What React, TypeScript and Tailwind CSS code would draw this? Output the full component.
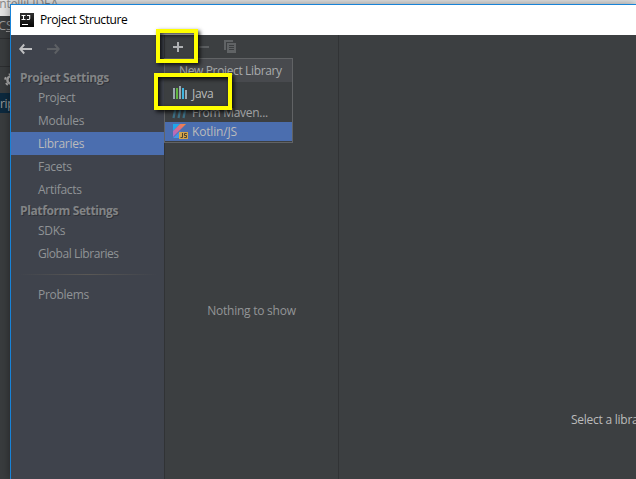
import type { ReactNode } from "react";

function Heading({ children }: { children: ReactNode }) {
  return (
    <div className="h-[18px] pl-[9px] text-[12px] leading-[19px] font-bold tracking-[-0.32px] text-[#828486] [text-shadow:1px_1px_0_#303238]">
      {children}
    </div>
  );
}

function Item({ children, selected = false }: { children: ReactNode; selected?: boolean }) {
  return (
    <div className={selected ? "h-[23px] bg-[#4b6eaf] pl-[27px] leading-[23px] text-[#bbbbbb]" : "h-[23px] pl-[27px] leading-[23px] text-[#909396]"}>
      {children}
    </div>
  );
}

function Arrow({ color, flip = false }: { color: string; flip?: boolean }) {
  return (
    <svg width="14" height="12" viewBox="0 0 14 12" className={flip ? "-scale-x-100" : ""} fill="none" stroke={color} strokeWidth="1.9">
      <path d="M5.2 1.5 1.2 6l4 4.5M1.5 6H13" />
    </svg>
  );
}

function Bars() {
  return (
    <svg width="16" height="14" viewBox="0 0 16 14">
      <path fill="#9aa7b0" d="M1 2h2v11H1zM7 0h2v13H7zM13 4h2v9h-2z" />
      <path fill="#62b543" d="M4 2h2v11H4z" />
      <path fill="#40b6e0" d="M10 2h2v11h-2z" />
    </svg>
  );
}

export default function App() {
  return (
    <div className="relative h-[479px] w-[636px] overflow-hidden bg-[#393c3e] font-['Open_Sans','Noto_Sans',sans-serif] text-[12px] tracking-[-0.28px] whitespace-nowrap">
      <div className="h-4 overflow-hidden bg-[#e4e4e4] leading-[11px] tracking-[-0.1px] text-[#888]"><div className="-mt-[2px] -ml-[4px] text-[12px]">IntelliJ IDEA</div></div>
      <div className="h-[23px] border-b border-[#2c2e30] text-[13px] text-[#9a9a9a]"><span className="-ml-[2px]">C<u>S</u>S</span></div>
      <div className="h-[28px] border-b border-[#2c2e30]" />
      <div className="h-[28px] pt-[6px] pl-[4px]">
        <svg width="14" height="14" viewBox="0 0 14 14" fill="none" stroke="#aaa"><circle cx="7" cy="7" r="3.6" strokeWidth="2.4" /><circle cx="7" cy="7" r="5.8" strokeWidth="2" strokeDasharray="2.5 3.57" /></svg>
      </div>
      <div className="-mt-[2px] h-5 bg-[#0d293e] leading-[22px] text-[#999]">ript</div>

      <div className="absolute top-1 left-[10px] flex h-[475px] w-[626px] flex-col border-t border-l border-[#1883d7] bg-[#3c3f41] shadow-[0_0_9px_rgba(0,0,0,0.4)]">
        <header className="flex h-[30px] shrink-0 items-center bg-white pl-[9px] text-[12px] tracking-[-0.42px] text-black">
          <svg width="14" height="14" viewBox="0 0 14 14" className="mr-[6px]">
            <defs><linearGradient id="logo" x2="0" y2="1"><stop stopColor="#303030" /><stop offset="1" stopColor="#050505" /></linearGradient></defs>
            <path fill="url(#logo)" d="M0 0h14v14H0z" />
            <path fill="none" stroke="#fff" strokeWidth="1.1" d="M1.5 2.5h4M3.5 2.5v4M1.5 6.5h4M7 2.5h2.7v2.9q0 1.1-1.1 1.1H6.8M2 11.5h6" />
          </svg>
          <span>Project Structure</span>
        </header>
        <div className="flex min-h-0 flex-1">
          <aside className="w-[153px] shrink-0 bg-[#3f434c]">
            <div className="flex h-[33px] items-start gap-[13px] pt-[8px] pl-[8px]">
              <Arrow color="#bfc0c2" />
              <Arrow color="#5d6064" flip />
            </div>
            <Heading>Project Settings</Heading>
            <Item>Project</Item>
            <Item>Modules</Item>
            <Item selected>Libraries</Item>
            <Item>Facets</Item>
            <Item>Artifacts</Item>
            <Heading><span className="tracking-[-0.38px]">Platform Settings</span></Heading>
            <Item>SDKs</Item>
            <Item><span className="tracking-[-0.45px]">Global Libraries</span></Item>
            <div className="mx-[7px] mt-[9px] mb-[8px] h-px bg-linear-to-r from-transparent via-[#5a5855] to-transparent" />
            <Item>Problems</Item>
          </aside>
          <section className="flex w-[175px] shrink-0 flex-col border-x border-[#313335]">
            <div className="flex h-[23px] items-center pl-[8px]">
              <svg width="10" height="10" viewBox="0 0 10 10" className="mt-px mr-[16px]"><path stroke="#afb1b3" strokeWidth="2" d="M5 0v10M0 5h10" /></svg>
              <svg width="10" height="10" viewBox="0 0 10 10" className="mt-px mr-[15px]"><path fill="#5c5f61" d="M0 4h10v2H0z" /></svg>
              <svg width="12" height="13" viewBox="0 0 12 13"><path fill="#606365" d="M0 0h9v2H2v8H0zM3 3h9v10H3z" /><path stroke="#3c3f41" d="M5 5.5h5M5 7.5h5M5 9.5h5" /></svg>
            </div>
            <div className="mt-[242px] text-center leading-[22px] tracking-[-0.25px] text-[#939597]">Nothing to show</div>
          </section>
          <main className="min-w-0 flex-1 overflow-hidden pt-[374px] pl-[232px] leading-[22px] tracking-[-0.25px] text-[#bbbbbb]">Select a library to view or edit</main>
        </div>
      </div>

      <div className="absolute top-[58px] left-[164px] h-[85px] w-[129px] border border-[#616365] bg-[#3c3f41] text-[#bbbbbb]">
        <div className="h-[23px] bg-[#484a4e] pl-[14px] leading-[24px] tracking-[-0.36px] text-[#a8aaac]">New Project Library</div>
        <div className="h-[21px]" />
        <div className="flex h-[19px] items-center pl-[6px] leading-[17px] text-[#a0a2a4]">
          <svg width="16" height="13" viewBox="0 0 16 13" className="mr-[5px]"><path stroke="#3d7186" strokeWidth="2.2" fill="none" d="m2.5 12 2-10M7.5 12l2-10M12.5 12l2-10" /></svg>
          From Maven...
        </div>
        <div className="flex h-[19px] items-start bg-[#4b6eaf] pt-px pl-[7px]">
          <svg width="16" height="16" viewBox="0 0 16 16" className="mr-[4px]">
            <defs><linearGradient id="kt" x1="0" y1="1" x2="1" y2="0"><stop stopColor="#9c6bd8" /><stop offset=".5" stopColor="#d66c91" /><stop offset="1" stopColor="#f98937" /></linearGradient></defs>
            <path fill="#20a7e9" d="M1 1h7L1 8z" /><path fill="url(#kt)" d="M8 1h6L1 14V8z" /><path fill="#4596e6" d="m1 15 7-7 6 7z" />
            <path fill="#d3a54a" d="M7 9h9v7H7z" />
            <path fill="none" stroke="#4b4332" d="M10.5 10v4.5h-2M14.8 10.5h-2.3v2h2v2h-2.3" />
          </svg>
          <span className="leading-[18px] tracking-[-0.18px]">Kotlin/JS</span>
        </div>
      </div>

      <div className="absolute top-[29px] left-[156px] h-[34px] w-[42px] border-4 border-[#ffff00] shadow-[2px_2px_4px_rgba(0,0,0,0.8),inset_2px_2px_4px_rgba(0,0,0,0.8)]" />
      <div className="absolute top-[73px] left-[154px] flex h-[37px] w-[78px] items-center border-4 border-[#ffff00] bg-linear-to-r from-[#3f434c] from-[6px] to-[#3c3f41] to-[6px] pt-[3px] pl-[14px] text-[#bbbbbb] shadow-[2px_2px_4px_rgba(0,0,0,0.8),inset_2px_2px_4px_rgba(0,0,0,0.9)]">
        <Bars /><span className="ml-[4px] pt-[2px] leading-[18px]">Java</span>
      </div>
    </div>
  );
}
